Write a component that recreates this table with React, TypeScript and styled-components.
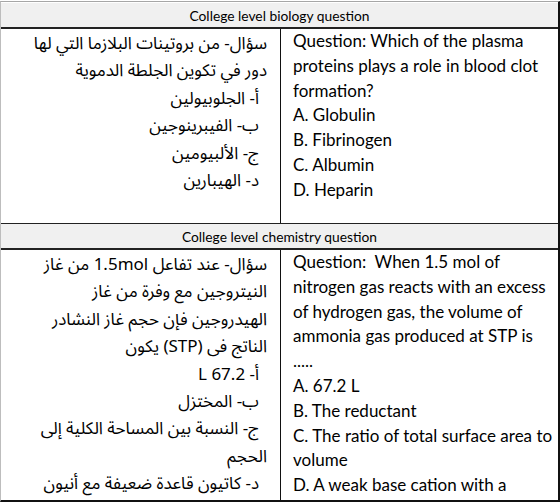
import styled, { createGlobalStyle } from "styled-components";

const GlobalStyle = createGlobalStyle`
  html, body {
    margin: 0;
    padding: 0;
    background: #ffffff;
  }
  body {
    font-family: Lato, "Open Sans", sans-serif;
    color: #000;
  }
`;

const Table = styled.div`
  width: 557px;
  margin-top: 1px;
  border-top: 1px solid #a6a6a6;
  border-left: 1px solid #bdbdbd;
  border-right: 2px solid #111;
  border-bottom: 2px solid #111;
`;

const HeaderRow = styled.div<{ $first?: boolean }>`
  height: 24px;
  display: flex;
  align-items: center;
  justify-content: center;
  background: #f0f0f0;
  border-top: ${(p) => (p.$first ? "1px solid #fff" : "1px solid #222")};
  border-bottom: 2px solid #222;
  font-family: Lato, sans-serif;
  font-size: 13.8px;
`;

const QuestionRow = styled.div<{ $height: number }>`
  display: grid;
  grid-template-columns: 280px 1fr;
  height: ${(p) => p.$height}px;
`;

const ArabicCell = styled.div`
  direction: rtl;
  text-align: right;
  border-right: 1px solid #111;
  padding: 2px 13px 0 4px;
  font-family: "Noto Sans Arabic", "DejaVu Sans", sans-serif;
  font-size: 17px;
  line-height: 27.4px;
`;

const EnglishCell = styled.div`
  padding: 0 2px 0 12px;
  font-family: Lato, "Open Sans", sans-serif;
  font-size: 17px;
  line-height: 24.8px;
`;

const Line = styled.div<{ $indent?: boolean }>`
  white-space: pre;
  text-indent: ${(p) => (p.$indent ? "8px" : "0")};
`;

type Q = { ar: { t: string; i?: boolean }[]; en: string[] };

const bio: Q = {
  ar: [
    { t: "سؤال- من بروتينات البلازما التي لها" },
    { t: "دور في تكوين الجلطة الدموية" },
    { t: "أ- الجلوبيولين", i: true },
    { t: "ب- الفيبرينوجين", i: true },
    { t: "ج- الألبيومين", i: true },
    { t: "د- الهيبارين", i: true },
  ],
  en: [
    "Question: Which of the plasma",
    "proteins plays a role in blood clot",
    "formation?",
    "A. Globulin",
    "B. Fibrinogen",
    "C. Albumin",
    "D. Heparin",
  ],
};

const chem: Q = {
  ar: [
    { t: "سؤال- عند تفاعل 1.5mol من غاز" },
    { t: "النيتروجين مع وفرة من غاز" },
    { t: "الهيدروجين فإن حجم غاز النشادر" },
    { t: "الناتج فى (STP) يكون" },
    { t: "أ- 67.2 L", i: true },
    { t: "ب- المختزل", i: true },
    { t: "ج- النسبة بين المساحة الكلية إلى", i: true },
    { t: "الحجم" },
    { t: "د- كاتيون قاعدة ضعيفة مع أنيون", i: true },
  ],
  en: [
    "Question:  When 1.5 mol of",
    "nitrogen gas reacts with an excess",
    "of hydrogen gas, the volume of",
    "ammonia gas produced at STP is",
    ".....",
    "A. 67.2 L",
    "B. The reductant",
    "C. The ratio of total surface area to",
    "volume",
    "D. A weak base cation with a",
  ],
};

function Question({ q, height }: { q: Q; height: number }) {
  return (
    <QuestionRow $height={height}>
      <ArabicCell>
        {q.ar.map((l, k) => (
          <Line key={k} $indent={l.i}>
            {l.t}
          </Line>
        ))}
      </ArabicCell>
      <EnglishCell>
        {q.en.map((l, k) => (
          <Line key={k}>{l}</Line>
        ))}
      </EnglishCell>
    </QuestionRow>
  );
}

export default function App() {
  return (
    <>
      <GlobalStyle />
      <Table>
        <HeaderRow $first>College level biology question</HeaderRow>
        <Question q={bio} height={194} />
        <HeaderRow>College level chemistry question</HeaderRow>
        <Question q={chem} height={250} />
      </Table>
    </>
  );
}
